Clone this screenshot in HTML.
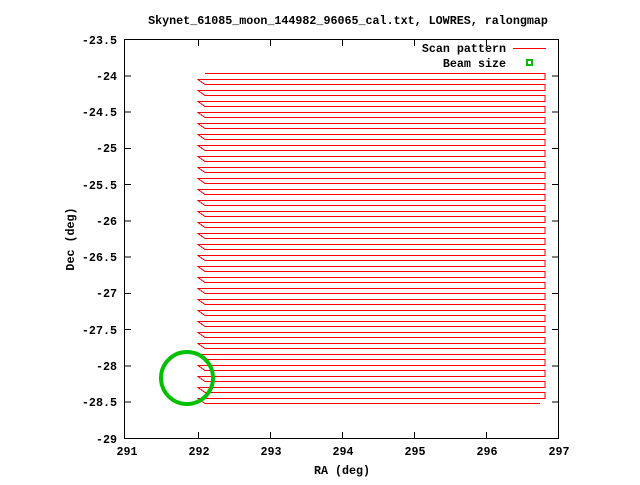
<!DOCTYPE html>
<html><head><style>
html,body{margin:0;padding:0;background:#fff;}
svg text{font-family:"Liberation Mono",monospace;font-weight:bold;font-size:11.7px;fill:#000;}
</style></head><body>
<svg width="640" height="480" viewBox="0 0 640 480" xmlns="http://www.w3.org/2000/svg">
<text x="348" y="24" text-anchor="middle">Skynet_61085_moon_144982_96065_cal.txt, LOWRES, ralongmap</text>
<g stroke="#000" stroke-width="1" fill="none" shape-rendering="crispEdges">
<rect x="124.5" y="39.5" width="434" height="399"/>
<path d="M198.5,438V432M198.5,40V46M270.5,438V432M270.5,40V46M342.5,438V432M342.5,40V46M414.5,438V432M414.5,40V46M486.5,438V432M486.5,40V46
M125,75.8h6M558,75.8h-6M125,112.1h6M558,112.1h-6M125,148.3h6M558,148.3h-6M125,184.6h6M558,184.6h-6M125,220.9h6M558,220.9h-6M125,257.1h6M558,257.1h-6M125,293.4h6M558,293.4h-6M125,329.7h6M558,329.7h-6M125,365.9h6M558,365.9h-6M125,402.2h6M558,402.2h-6"/>
</g>
<g text-anchor="end">
<text x="117" y="44">-23.5</text>
<text x="117" y="80">-24</text>
<text x="117" y="116">-24.5</text>
<text x="117" y="152">-25</text>
<text x="117" y="189">-25.5</text>
<text x="117" y="225">-26</text>
<text x="117" y="261">-26.5</text>
<text x="117" y="297">-27</text>
<text x="117" y="334">-27.5</text>
<text x="117" y="370">-28</text>
<text x="117" y="406">-28.5</text>
<text x="117" y="443">-29</text>
</g>
<g text-anchor="middle">
<text x="127" y="455">291</text>
<text x="199" y="455">292</text>
<text x="271" y="455">293</text>
<text x="343" y="455">294</text>
<text x="415" y="455">295</text>
<text x="487" y="455">296</text>
<text x="559" y="455">297</text>
<text x="342" y="474">RA (deg)</text>
<text transform="translate(74,239) rotate(-90)">Dec (deg)</text>
</g>
<text x="506" y="52" text-anchor="end">Scan pattern</text>
<text x="506" y="67" text-anchor="end">Beam size</text>
<path d="M513,48.5H546" stroke="#f00" stroke-width="1" shape-rendering="crispEdges"/>
<rect x="527" y="60" width="5" height="5" fill="none" stroke="#00c000" stroke-width="2"/>
<path fill="none" stroke="#f00" stroke-width="1" shape-rendering="crispEdges" d="M205,73.5
h340v6h-347l7,5 h340v6h-347l7,5 h340v6h-347l7,5 h340v6h-347l7,5 h340v6h-347l7,5
h340v6h-347l7,5 h340v6h-347l7,5 h340v6h-347l7,5 h340v6h-347l7,5 h340v6h-347l7,5
h340v6h-347l7,5 h340v6h-347l7,5 h340v6h-347l7,5 h340v6h-347l7,5 h340v6h-347l7,5
h340v6h-347l7,5 h340v6h-347l7,5 h340v6h-347l7,5 h340v6h-347l7,5 h340v6h-347l7,5
h340v6h-347l7,5 h340v6h-347l7,5 h340v6h-347l7,5 h340v6h-347l7,5 h340v6h-347l7,5
h340v6h-347l7,5 h340v6h-347l7,5 h340v6h-347l7,5 h340v6h-347l7,5 h340v6h-347l7,5 h335"/>
<circle cx="187" cy="378" r="26" fill="none" stroke="#00c000" stroke-width="4"/>
</svg>
</body></html>
